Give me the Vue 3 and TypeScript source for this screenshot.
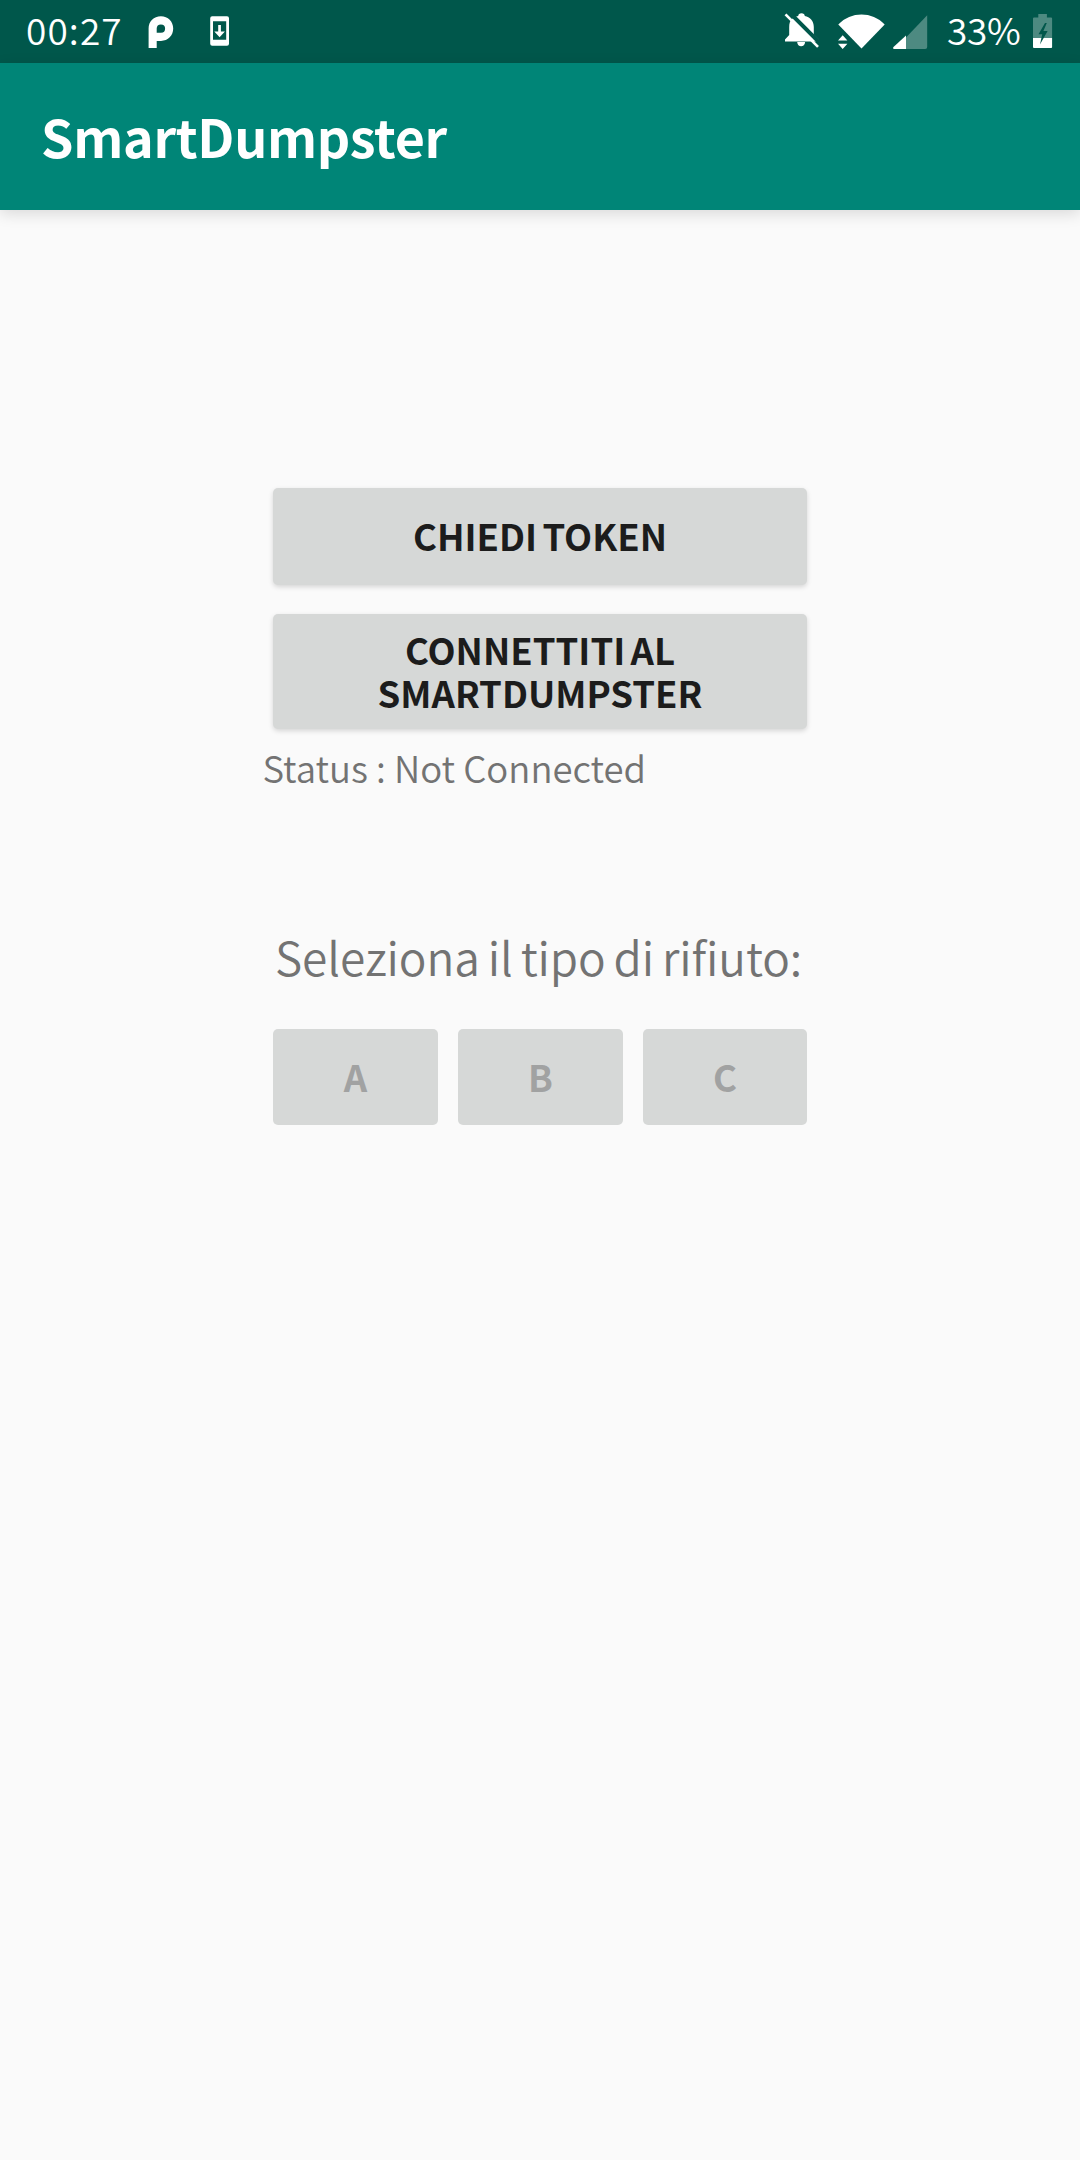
<script setup lang="ts">
const wasteTypes: string[] = ['A', 'B', 'C']
</script>

<template>
  <div class="screen">
    <header class="status-bar">
      <span class="clock">00:27</span>
      <svg class="parking" width="26" height="34" viewBox="0 0 26 34">
        <path fill="#fff" fill-rule="evenodd" d="M0.6 32V12.5C0.6 5.5 5.8 0.3 12.9 0.3S25.2 5.5 25.2 12.6 20 24.9 13 24.9H8.7V32ZM8.7 16.8H13a4.2 4.2 0 1 0-4.3-4.2Z" />
      </svg>
      <svg class="update" width="20" height="30" viewBox="0 0 20 30">
        <path fill="#fff" fill-rule="evenodd" d="M2.2 0.3h14.8a2 2 0 0 1 2 2v25.4a2 2 0 0 1-2 2H2.2a2 2 0 0 1-2-2V2.3a2 2 0 0 1 2-2ZM3 5.3v18.4h13.2V5.3Z" />
        <path fill="#fff" d="M8.2 9h2.7v6.4h4L9.6 21.2 4.3 15.4h3.9Z" />
      </svg>
      <span class="spacer"></span>
      <svg class="bell" width="36" height="36" viewBox="0 0 36 36">
        <path fill="#fff" d="M5.200 14c0-7 4-10 9-10.900C14.400 1.300 15.500 0.300 17.500 0.300s3.100 1 3.300 2.800c5 .9 9 4.700 9 10.900v7.500l5 5v1.900H1v-1.900l4.200-4.500ZM13.200 29h7.900c0 5.700-7.900 5.700-7.900 0Z" />
        <path stroke="#00574b" stroke-width="4" d="M4.500-1.500 37 31" />
        <path stroke="#fff" stroke-width="2.600" d="M1.500 1.300 34 33.800" />
      </svg>
      <svg class="wifi" width="47" height="36" viewBox="0 0 47 36">
        <path fill="#fff" d="M0.300 10.500C13-2.800 34-2.800 46.700 10.500L23.500 34.500Z" />
        <path fill="#fff" d="M0 26.500 4.700 21.300 9.400 26.500ZM0 29.700h9.400L4.700 34.900Z" />
      </svg>
      <svg class="signal" width="36" height="36" viewBox="0 0 36 36">
        <path fill="#4d8a81" d="M34.200 1.200V33a2 2 0 0 1-2 2H2Z" />
        <path fill="#fff" d="M13 21.500V35H1.500c-1.300 0-1.800-1-1-2Z" />
      </svg>
      <span class="percent">33%</span>
      <svg class="battery" width="20" height="34" viewBox="0 0 20 34">
        <path fill="#4d8a81" d="M5.300 0h8.600v3.600h4.200a1 1 0 0 1 1 1V24H0V4.600a1 1 0 0 1 1-1h4.300Z" />
        <path fill="#fff" d="M0 24h19.100v9a1 1 0 0 1-1 1H1a1 1 0 0 1-1-1Z" />
        <path fill="#00574b" d="M12 9 5.500 20.200h3.700L7 30.500l7.600-13.600h-4.200L13.800 9Z" />
      </svg>
    </header>
    <div class="app-bar"><h1>SmartDumpster</h1></div>
    <main>
      <button class="token"><span>CHIEDI TOKEN</span></button>
      <button class="connect"><span>CONNETTITI AL SMARTDUMPSTER</span></button>
      <p class="state">Status : Not Connected</p>
      <p class="prompt">Seleziona il tipo di rifiuto:</p>
      <div class="types">
        <button v-for="t in wasteTypes" :key="t" disabled><span>{{ t }}</span></button>
      </div>
    </main>
  </div>
</template>

<style>
body { margin: 0; background: #fafafa; }
</style>

<style scoped>
.screen {
  width: 1080px;
  height: 2160px;
  overflow: hidden;
  background: #fafafa;
  font-family: "Noto Sans CJK SC", "Noto Sans", sans-serif;
  color: #737373;
}
.status-bar {
  display: flex;
  align-items: flex-start;
  box-sizing: border-box;
  height: 63px;
  padding-left: 26px;
  background: #00574b;
  color: #fff;
  font-size: 37px;
  font-weight: 350;
  line-height: 59px;
  white-space: nowrap;
}
svg { flex: none; display: block; }
.clock { width: 122px; letter-spacing: 1.100px; }
.parking { margin-top: 16px; }
.update { margin: 16px 0 0 36px; }
.spacer { flex: 1; }
.bell { margin: 13px 0 0; }
.wifi { margin: 14px 0 0 18px; }
.signal { margin: 14px 0 0 8px; }
.percent { margin-left: 18px; width: 86px; letter-spacing: -.3px; }
.battery { margin: 14px 27px 0 0; }
.app-bar {
  box-sizing: border-box;
  height: 147px;
  padding-left: 41px;
  background: #008577;
  box-shadow: 0 4px 14px rgba(0, 0, 0, .13);
}
h1 {
  margin: 0;
  color: #fff;
  font-size: 52px;
  font-weight: 700;
  letter-spacing: -.3px;
  line-height: 145px;
}
main {
  display: flex;
  flex-direction: column;
  width: 534px;
  margin: 278px auto 0;
}
button {
  display: flex;
  align-items: center;
  justify-content: center;
  box-sizing: border-box;
  padding: 0 0 2px;
  border: 0;
  border-radius: 5px;
  background: #d6d8d7;
  color: #1c1c1c;
  font-family: inherit;
  font-size: 36.500px;
  font-weight: 700;
  line-height: 43px;
  text-align: center;
}
.token, .connect { box-shadow: 0 2px 5px rgba(0, 0, 0, .15); }
.token { height: 97px; word-spacing: -3px; }
.connect { height: 115px; margin-top: 29px; padding: 0 80px 2px; word-spacing: -3px; }
p { margin: 0; white-space: nowrap; }
.state {
  margin: 9px 0 0 -10.500px;
  font-size: 36.500px;
  font-weight: 350;
  line-height: 60px;
}
.prompt {
  margin-top: 118px;
  padding-left: 2px;
  font-size: 46px;
  font-weight: 350;
  letter-spacing: -.1px;
  line-height: 80px;
  word-spacing: -2.200px;
}
.types {
  display: flex;
  gap: 20px;
  margin-top: 33px;
}
.types button { width: 165px; height: 96px; color: #a1a2a2; }
.types button:last-child { width: 164px; }
</style>
